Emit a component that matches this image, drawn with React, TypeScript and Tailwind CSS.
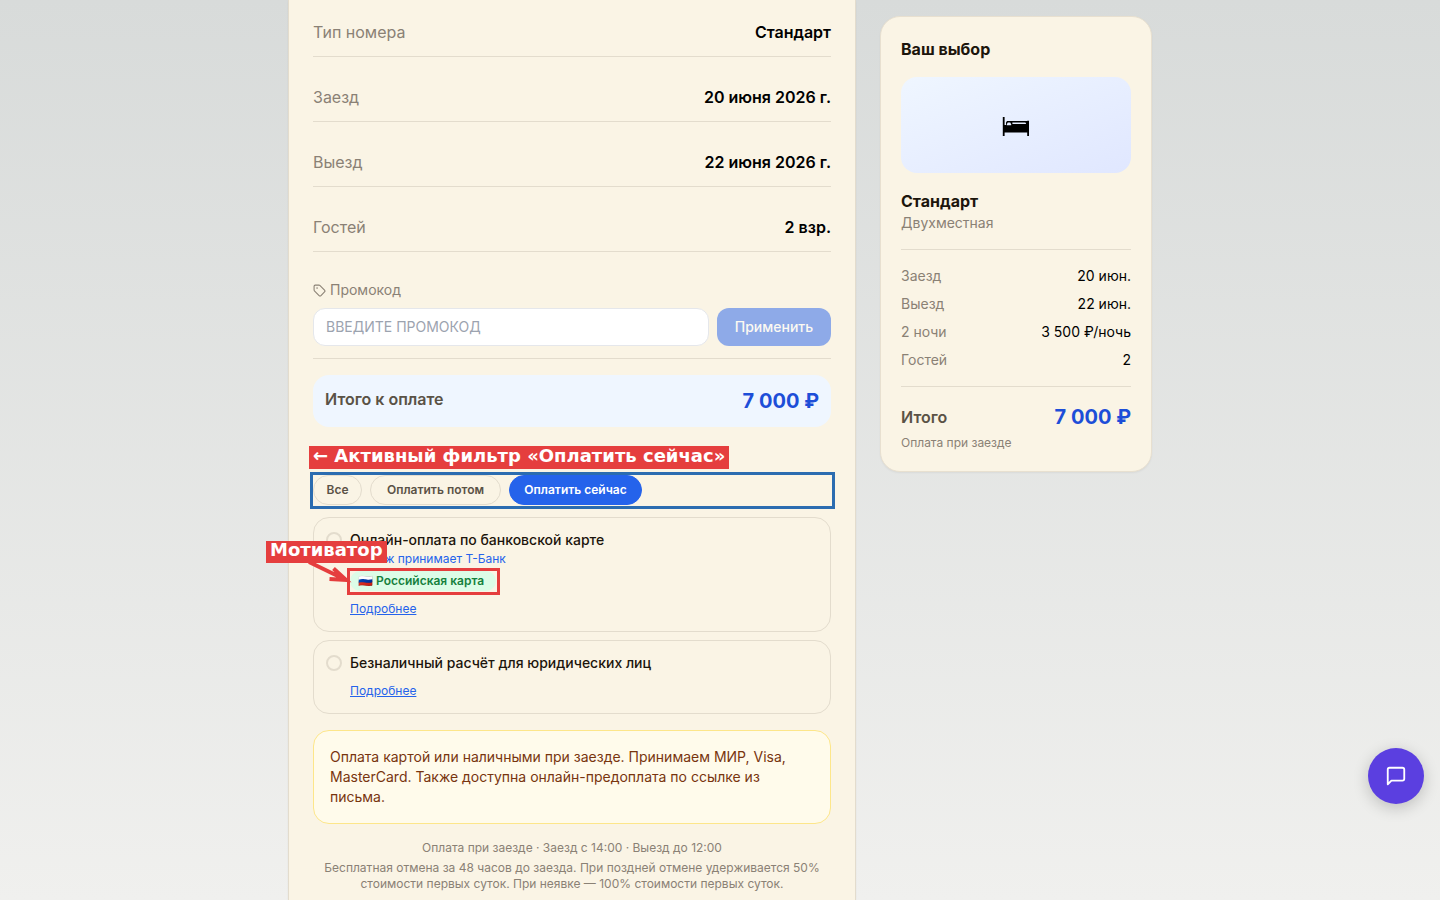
import type { ReactNode } from "react";

const bookingRows = [
  { label: "Тип номера", value: "Стандарт" },
  { label: "Заезд", value: "20 июня 2026 г." },
  { label: "Выезд", value: "22 июня 2026 г." },
  { label: "Гостей", value: "2 взр." },
];

const summaryRows = [
  { label: "Заезд", value: "20 июн." },
  { label: "Выезд", value: "22 июн." },
  { label: "2 ночи", value: "3 500 ₽/ночь" },
  { label: "Гостей", value: "2" },
];

function TagIcon() {
  return (
    <svg className="size-[13px] shrink-0" viewBox="0 0 24 24" fill="none" stroke="currentColor" strokeWidth="2" strokeLinecap="round" strokeLinejoin="round" aria-hidden="true">
      <path d="M12.586 2.586A2 2 0 0 0 11.172 2H4a2 2 0 0 0-2 2v7.172a2 2 0 0 0 .586 1.414l8.704 8.704a2.426 2.426 0 0 0 3.42 0l6.58-6.58a2.426 2.426 0 0 0 0-3.42z" />
      <circle cx="7.5" cy="7.5" r=".5" fill="currentColor" />
    </svg>
  );
}

function BedIcon() {
  return (
    <svg className="h-6 w-7" viewBox="0 0 28 24" aria-hidden="true">
      <path d="M0.8 4h1.8v8H4V9.5L5 8h20.2V7.8H27V23h-1.8v-3.5H2.6V23H0.8z" fill="#000" />
      <path d="M4.8 11.2l1-1.8h2.4l1 1.8v1H4.8zM10.4 9.4H23.4L24.2 11H10.4z" fill="#e6edff" />
    </svg>
  );
}

function PaymentOption({ title, children }: { title: string; children?: ReactNode }) {
  return (
    <div className="flex gap-2 rounded-2xl border border-[#e3dccd] p-3">
      <input
        type="radio"
        name="payment"
        aria-label={title}
        className="mt-0.5 size-4 shrink-0 appearance-none rounded-full border-2 border-[#e3dccd] checked:border-[#2563eb]"
      />
      <div className="flex flex-1 flex-col items-start">
        <h3 className="text-sm font-medium text-[#1c150c]">{title}</h3>
        {children}
        <a href="#details" className="mt-2 text-xs leading-5 text-[#2563eb] underline">
          Подробнее
        </a>
      </div>
    </div>
  );
}

export default function App() {
  return (
    <div className="min-h-screen bg-linear-to-b from-[#d8dbda] to-[#f0f0ee] font-['Inter','Liberation_Sans',sans-serif] text-black">
      <div className="mx-auto flex max-w-4xl items-start gap-6 px-4">
        <main className="min-h-screen flex-1 border-x border-[#e3dccd] bg-[#faf4e5] px-6 pt-5 pb-2 shadow-[0_1px_2px_rgba(0,0,0,0.05)]">
          <dl className="flex flex-col gap-7">
            {bookingRows.map((row) => (
              <div key={row.label} className="flex justify-between border-b border-[#e3dccd] pb-3">
                <dt className="text-[#8a8175]">{row.label}</dt>
                <dd className="font-semibold">{row.value}</dd>
              </div>
            ))}
          </dl>

          <form className="mt-7 border-b border-[#e3dccd] pb-3" onSubmit={(e) => e.preventDefault()}>
            <label htmlFor="promo" className="flex items-center gap-1 text-sm text-[#8a8175]">
              <TagIcon />
              Промокод
            </label>
            <div className="mt-2 flex gap-2">
              <input
                id="promo"
                type="text"
                placeholder="ВВЕДИТЕ ПРОМОКОД"
                className="min-w-0 flex-1 rounded-xl border border-gray-200 bg-white px-3 py-2 text-sm uppercase placeholder:text-[#9ca3af]"
              />
              <button type="submit" disabled className="min-w-[114px] rounded-xl bg-[#2563eb] px-4 text-sm font-medium text-white disabled:opacity-50">
                Применить
              </button>
            </div>
          </form>

          <div className="mt-4 flex justify-between rounded-2xl bg-[#eff6ff] p-3">
            <span className="font-semibold text-[#5a5246]">Итого к оплате</span>
            <span className="text-xl font-bold text-[#1d4ed8]">7 000 ₽</span>
          </div>

          <section className="relative mt-12" aria-label="Способ оплаты">
            <div className="flex gap-2">
              <button type="button" className="min-w-[49px] rounded-full border border-[#e3dccd] px-3 py-1.5 text-xs font-semibold text-[#5a5246]">
                Все
              </button>
              <button type="button" className="min-w-[131px] rounded-full border border-[#e3dccd] px-3 py-1.5 text-xs font-semibold text-[#5a5246]">
                Оплатить потом
              </button>
              <button type="button" className="min-w-[133px] rounded-full border border-[#2563eb] bg-[#2563eb] px-3 py-1.5 text-xs font-semibold text-white">
                Оплатить сейчас
              </button>
            </div>
            <div className="pointer-events-none absolute -inset-[3px] -right-1 -bottom-1 border-3 border-[#2b6cb0]" />
            <p className="absolute -top-[29px] -left-1 bg-[#e53e3e] px-1 pb-1 font-['DejaVu_Sans',sans-serif] text-lg leading-[19px] font-bold whitespace-nowrap text-white">
              ← Активный фильтр «Оплатить сейчас»
            </p>
          </section>

          <section className="relative mt-3 flex flex-col gap-2">
            <PaymentOption title="Онлайн-оплата по банковской карте">
              <p className="mt-px text-xs text-[#2563eb]">Платёж принимает Т-Банк</p>
              <div className="relative mt-1 min-w-[146px]">
                <span className="block rounded-full bg-[#dcfce7] px-2 py-0.5 text-xs font-semibold text-[#15803d]">🇷🇺 Российская карта</span>
                <div className="pointer-events-none absolute -inset-[3px] -right-1 -bottom-1 border-3 border-[#e53e3e]" />
              </div>
            </PaymentOption>
            <PaymentOption title="Безналичный расчёт для юридических лиц" />
            <svg className="absolute top-11 -left-2 h-6 w-12" viewBox="0 0 48 24" fill="none" stroke="#e53e3e" strokeWidth="4" aria-hidden="true">
              <path d="M4 1L40 18.5M28.5 7.5L41 19L24.5 18" />
            </svg>
            <p className="absolute top-6 -left-[47px] bg-[#e53e3e] px-1 pb-1 font-['DejaVu_Sans',sans-serif] text-lg leading-[18px] font-bold text-white">Мотиватор</p>
          </section>

          <p className="mt-4 rounded-2xl border border-[#fde68a] bg-[#fffbeb] p-4 text-sm text-[#78350f]">
            Оплата картой или наличными при заезде. Принимаем МИР, Visa, MasterCard. Также доступна онлайн-предоплата по ссылке из письма.
          </p>

          <footer className="mt-4 text-center text-xs text-[#8a8175]">
            <p>Оплата при заезде · Заезд с 14:00 · Выезд до 12:00</p>
            <p className="mt-1">
              Бесплатная отмена за 48 часов до заезда. При поздней отмене удерживается 50% стоимости первых суток. При неявке — 100% стоимости первых суток.
            </p>
          </footer>
        </main>

        <aside className="mt-4 w-68 shrink-0 rounded-[20px] border border-[#e8e0d0] bg-[#faf4e5] p-5 shadow-[0_1px_2px_rgba(0,0,0,0.05)]">
          <h2 className="font-bold text-[#1c150c]">Ваш выбор</h2>
          <div className="mt-4 flex h-24 items-center justify-center rounded-2xl bg-linear-to-br from-[#eff6ff] to-[#e0e7ff]">
            <BedIcon />
          </div>
          <h3 className="mt-4 font-bold text-[#1c150c]">Стандарт</h3>
          <p className="text-sm text-[#8a8175]">Двухместная</p>
          <dl className="mt-4 flex flex-col gap-2 border-y border-[#e3dccd] py-4 text-sm">
            {summaryRows.map((row) => (
              <div key={row.label} className="flex justify-between">
                <dt className="text-[#8a8175]">{row.label}</dt>
                <dd>{row.value}</dd>
              </div>
            ))}
          </dl>
          <div className="mt-4 flex items-center justify-between">
            <span className="font-semibold text-[#5a5246]">Итого</span>
            <span className="text-xl font-bold text-[#1d4ed8]">7 000 ₽</span>
          </div>
          <p className="mt-1 text-xs text-[#8a8175]">Оплата при заезде</p>
        </aside>
      </div>

      <button type="button" aria-label="Открыть чат" className="fixed right-4 bottom-24 flex size-14 items-center justify-center rounded-full bg-[#5b3fe0] text-white shadow-[0_4px_16px_rgba(0,0,0,0.2)]">
        <svg className="size-[22px]" viewBox="0 0 24 24" fill="none" stroke="currentColor" strokeWidth="2" strokeLinecap="round" strokeLinejoin="round" aria-hidden="true">
          <path d="M21 15a2 2 0 0 1-2 2H7l-4 4V5a2 2 0 0 1 2-2h14a2 2 0 0 1 2 2z" />
        </svg>
      </button>
    </div>
  );
}
